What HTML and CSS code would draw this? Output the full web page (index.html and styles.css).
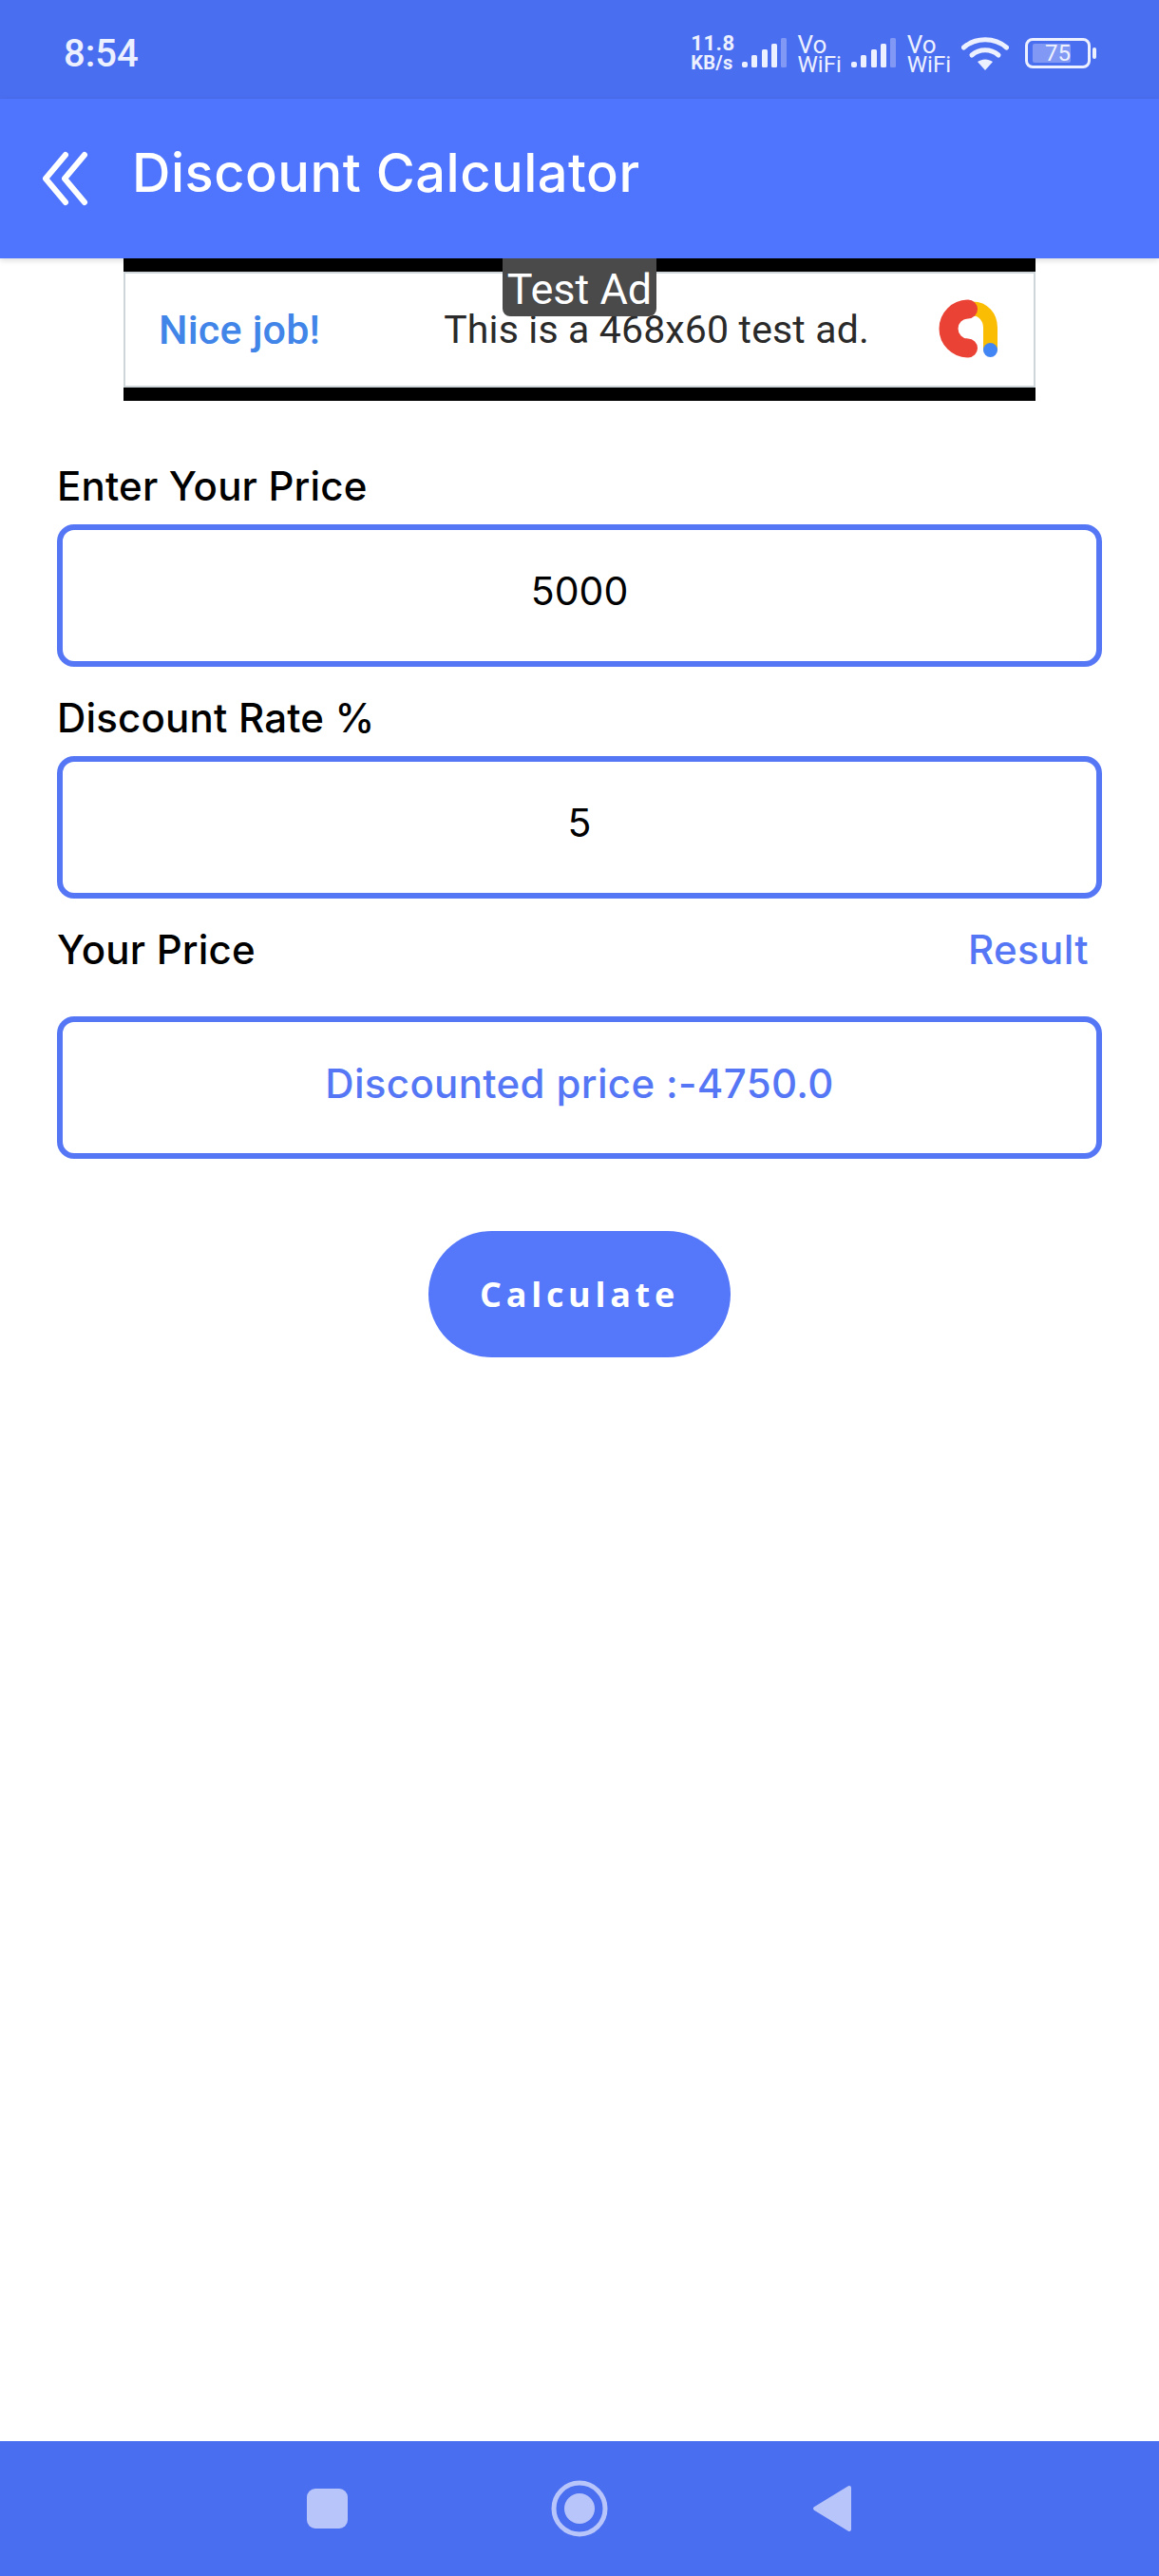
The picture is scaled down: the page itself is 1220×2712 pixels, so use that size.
FILE: index.html
```html
<!DOCTYPE html>
<html lang="en">
<head>
    <meta charset="UTF-8">
    <meta name="viewport" content="width=device-width, initial-scale=1.0">
    <title>Discount Calculator</title>
    <link rel="stylesheet" href="styles.css">
</head>
<body>

    <!-- Status bar -->
    <div class="status-bar">
        <span class="time">8:54</span>
        <div class="status-icons">
            <div class="net-speed"><span>11.8</span><span class="unit">KB/s</span></div>
            <svg class="signal" width="48" height="32" viewBox="0 0 48 32">
                <rect x="0" y="25" width="6" height="6" rx="2" fill="#edf1ff"/>
                <rect x="10" y="18" width="6" height="13" rx="1.5" fill="#edf1ff"/>
                <rect x="21" y="12" width="6" height="19" rx="1.5" fill="#edf1ff"/>
                <rect x="31" y="6" width="6" height="25" rx="1.5" fill="#edf1ff"/>
                <rect x="41" y="0" width="6" height="31" rx="1.5" fill="#8199f5"/>
            </svg>
            <div class="vowifi"><span class="vo">Vo</span><span>WiFi</span></div>
            <svg class="signal" width="48" height="32" viewBox="0 0 48 32">
                <rect x="0" y="25" width="6" height="6" rx="2" fill="#edf1ff"/>
                <rect x="10" y="18" width="6" height="13" rx="1.5" fill="#edf1ff"/>
                <rect x="21" y="12" width="6" height="19" rx="1.5" fill="#edf1ff"/>
                <rect x="31" y="6" width="6" height="25" rx="1.5" fill="#edf1ff"/>
                <rect x="41" y="0" width="6" height="31" rx="1.5" fill="#8199f5"/>
            </svg>
            <div class="vowifi"><span class="vo">Vo</span><span>WiFi</span></div>
            <svg class="wifi" width="50" height="36" viewBox="0 0 50 36">
                <path d="M2.5 12 C15 1 35 1 47.5 12" fill="none" stroke="#edf1ff" stroke-width="5" stroke-linecap="round"/>
                <path d="M11 20 C19 13 31 13 39 20" fill="none" stroke="#edf1ff" stroke-width="5" stroke-linecap="round"/>
                <path d="M25 36 L17 27 C22 23.500 28 23.500 33 27 Z" fill="#edf1ff"/>
            </svg>
            <div class="battery">
                <div class="battery-body">
                    <div class="battery-fill"></div>
                    <span class="battery-level">75</span>
                </div>
                <div class="battery-nub"></div>
            </div>
        </div>
    </div>

    <!-- App bar -->
    <div class="app-bar">
        <svg class="back-icon" width="50" height="58" viewBox="0 0 50 58">
            <path d="M26 4 L5 29 L26 54 M46 4 L25 29 L46 54" fill="none" stroke="#ffffff" stroke-width="6" stroke-linecap="round" stroke-linejoin="round"/>
        </svg>
        <h1>Discount Calculator</h1>
    </div>

    <div class="container">
        <!-- Test ad banner -->
        <div class="ad-banner">
            <div class="ad-inner">
                <span class="ad-title">Nice job!</span>
                <span class="ad-text">This is a 468x60 test ad.</span>
                <svg class="ad-logo" width="64" height="64" viewBox="0 0 64 64">
                    <path d="M36 10 C47 10 54.500 19 54.500 30 L54.500 52" fill="none" stroke="#fbbc04" stroke-width="15" stroke-linecap="round"/>
                    <path d="M31 10.500 A20.500 20.500 0 0 0 31 51.500" fill="none" stroke="#ea4335" stroke-width="20" stroke-linecap="round"/>
                    <circle cx="54.500" cy="53.500" r="7.500" fill="#4285f4"/>
                </svg>
            </div>
            <div class="ad-label">Test Ad</div>
        </div>

        <!-- Calculator form -->
        <form class="calc-form">
            <label class="field-label first" for="price">Enter Your Price</label>
            <input class="input-field" id="price" type="text" value="5000">

            <label class="field-label" for="rate">Discount Rate %</label>
            <input class="input-field" id="rate" type="text" value="5">

            <div class="result-row">
                <span class="field-label">Your Price</span>
                <span class="result-link">Result</span>
            </div>
            <div class="input-field result-box">Discounted price :-4750.0</div>

            <button class="button" type="button">Calculate</button>
        </form>
    </div>

    <!-- Navigation bar -->
    <div class="nav-bar">
        <div class="nav-square"></div>
        <svg class="nav-home" width="60" height="60" viewBox="0 0 60 60">
            <circle cx="30" cy="30" r="27" fill="none" stroke="#b8c5fa" stroke-width="5"/>
            <circle cx="30" cy="30" r="16" fill="#b8c5fa"/>
        </svg>
        <svg class="nav-back" width="42" height="50" viewBox="0 0 42 50">
            <path d="M39 3 L3 25 L39 47 Z" fill="#b8c5fa" stroke="#b8c5fa" stroke-width="4" stroke-linejoin="round"/>
        </svg>
    </div>

</body>
</html>
```

FILE: styles.css
```css
body {
    font-family: 'Inter', sans-serif;
    margin: 0;
    padding: 0;
    background: #ffffff;
    color: #000000;
    display: flex;
    flex-direction: column;
    height: 2712px;
    overflow: hidden;
}
/* Status bar */
.status-bar {
    height: 104px;
    box-sizing: border-box;
    flex-shrink: 0;
    background: #4a6ef0;
    display: flex;
    justify-content: space-between;
    align-items: center;
    padding: 8px 66px 0 67px;
    color: #edf1ff;
    font-family: 'Roboto', sans-serif;
}
.time {
    font-size: 40px;
    font-weight: 500;
}
.status-icons {
    display: flex;
    align-items: center;
    gap: 10px;
}
.net-speed {
    display: flex;
    flex-direction: column;
    font-size: 22px;
    font-weight: 700;
    line-height: 20px;
    letter-spacing: 0.5px;
    margin-right: -3px;
}
.net-speed .unit {
    font-size: 20px;
    letter-spacing: 0.3px;
}
.vowifi {
    display: flex;
    flex-direction: column;
    font-size: 24px;
    line-height: 24px;
    padding-top: 6px;
}
.vowifi .vo {
    font-size: 26px;
    line-height: 18px;
}
.signal {
    margin-right: 1px;
}
.wifi {
    margin: 0 7px 0 1px;
}
.battery {
    display: flex;
    align-items: center;
    gap: 2px;
}
.battery-body {
    position: relative;
    width: 69px;
    height: 32px;
    box-sizing: border-box;
    border: 3px solid #edf1ff;
    border-radius: 8px;
    display: flex;
    justify-content: center;
    align-items: center;
}
.battery-fill {
    position: absolute;
    left: 5px;
    top: 3px;
    bottom: 3px;
    width: 40px;
    background: #8199f5;
    border-radius: 2px;
}
.battery-level {
    position: relative;
    font-size: 24px;
}
.battery-nub {
    width: 4px;
    height: 12px;
    background: #edf1ff;
    border-radius: 2px;
}
/* App bar */
.app-bar {
    height: 168px;
    flex-shrink: 0;
    background: #4f75ff;
    display: flex;
    align-items: center;
    padding-left: 43px;
    gap: 46px;
    box-shadow: 0 2px 6px rgba(0, 0, 0, 0.15);
    position: relative;
}
.app-bar h1 {
    color: #ffffff;
    font-size: 56px;
    font-weight: 500;
    letter-spacing: 0.5px;
    margin: 0;
    padding-bottom: 13px;
}
.container {
    flex: 1;
    display: flex;
    flex-direction: column;
}
/* Ad banner */
.ad-banner {
    position: relative;
    width: 960px;
    height: 150px;
    flex-shrink: 0;
    margin: 0 auto;
    background: #000000;
    padding: 14px 0;
    box-sizing: border-box;
}
.ad-inner {
    height: 100%;
    box-sizing: border-box;
    background: #ffffff;
    border: 2px solid #cfd6da;
    display: flex;
    align-items: center;
    padding: 0 36px 0 35px;
}
.ad-title {
    font-family: 'Roboto', sans-serif;
    font-size: 43px;
    font-weight: 500;
    letter-spacing: 0.2px;
    color: #4285e8;
}
.ad-text {
    font-family: 'Roboto', sans-serif;
    font-size: 41px;
    letter-spacing: 0.15px;
    color: #2a2a2a;
    margin-left: 130px;
}
.ad-logo {
    margin-left: auto;
}
.ad-label {
    position: absolute;
    top: 0;
    left: 399px;
    width: 162px;
    height: 61px;
    background: #4a4a4a;
    color: #ffffff;
    font-family: 'Roboto', sans-serif;
    font-size: 45px;
    line-height: 66px;
    text-align: center;
    border-radius: 0 0 8px 8px;
}
/* Form */
.calc-form {
    display: flex;
    flex-direction: column;
    padding: 0 60px;
}
.field-label {
    font-size: 42px;
    font-weight: 500;
    letter-spacing: 0.2px;
    line-height: 60px;
    margin: 24px 0 10px;
    display: block;
}
.field-label.first {
    margin-top: 60px;
}
.input-field {
    height: 150px;
    box-sizing: border-box;
    width: 100%;
    flex-shrink: 0;
    border: 6px solid #5577f5;
    border-radius: 18px;
    background: #ffffff;
    font-family: 'Inter', sans-serif;
    font-size: 41px;
    color: #000000;
    text-align: center;
    outline: none;
    padding: 0 0 10px;
}
.result-row {
    display: flex;
    justify-content: space-between;
    align-items: baseline;
    padding-right: 14px;
    height: 124px;
}
.result-row .field-label {
    margin-bottom: 0;
}
.result-link {
    font-size: 42px;
    font-weight: 500;
    letter-spacing: 0.4px;
    color: #5577f5;
}
.result-box {
    display: flex;
    justify-content: center;
    align-items: center;
    font-size: 42px;
    font-weight: 500;
    letter-spacing: 0.35px;
    color: #5577f5;
}
.button {
    align-self: center;
    width: 318px;
    height: 133px;
    margin-top: 76px;
    border: none;
    border-radius: 67px;
    background: #5577f9;
    color: #ffffff;
    font-family: 'Open Sans', sans-serif;
    font-size: 36px;
    font-weight: 700;
    letter-spacing: 4.7px;
    cursor: pointer;
}
/* Navigation bar */
.nav-bar {
    height: 142px;
    flex-shrink: 0;
    background: #4a6ef0;
    display: flex;
    align-items: center;
    position: relative;
    padding-left: 323px;
}
.nav-square {
    width: 43px;
    height: 42px;
    background: #b8c5fa;
    border-radius: 9px;
}
.nav-home {
    margin-left: 214px;
}
.nav-back {
    margin-left: 215px;
}
```
